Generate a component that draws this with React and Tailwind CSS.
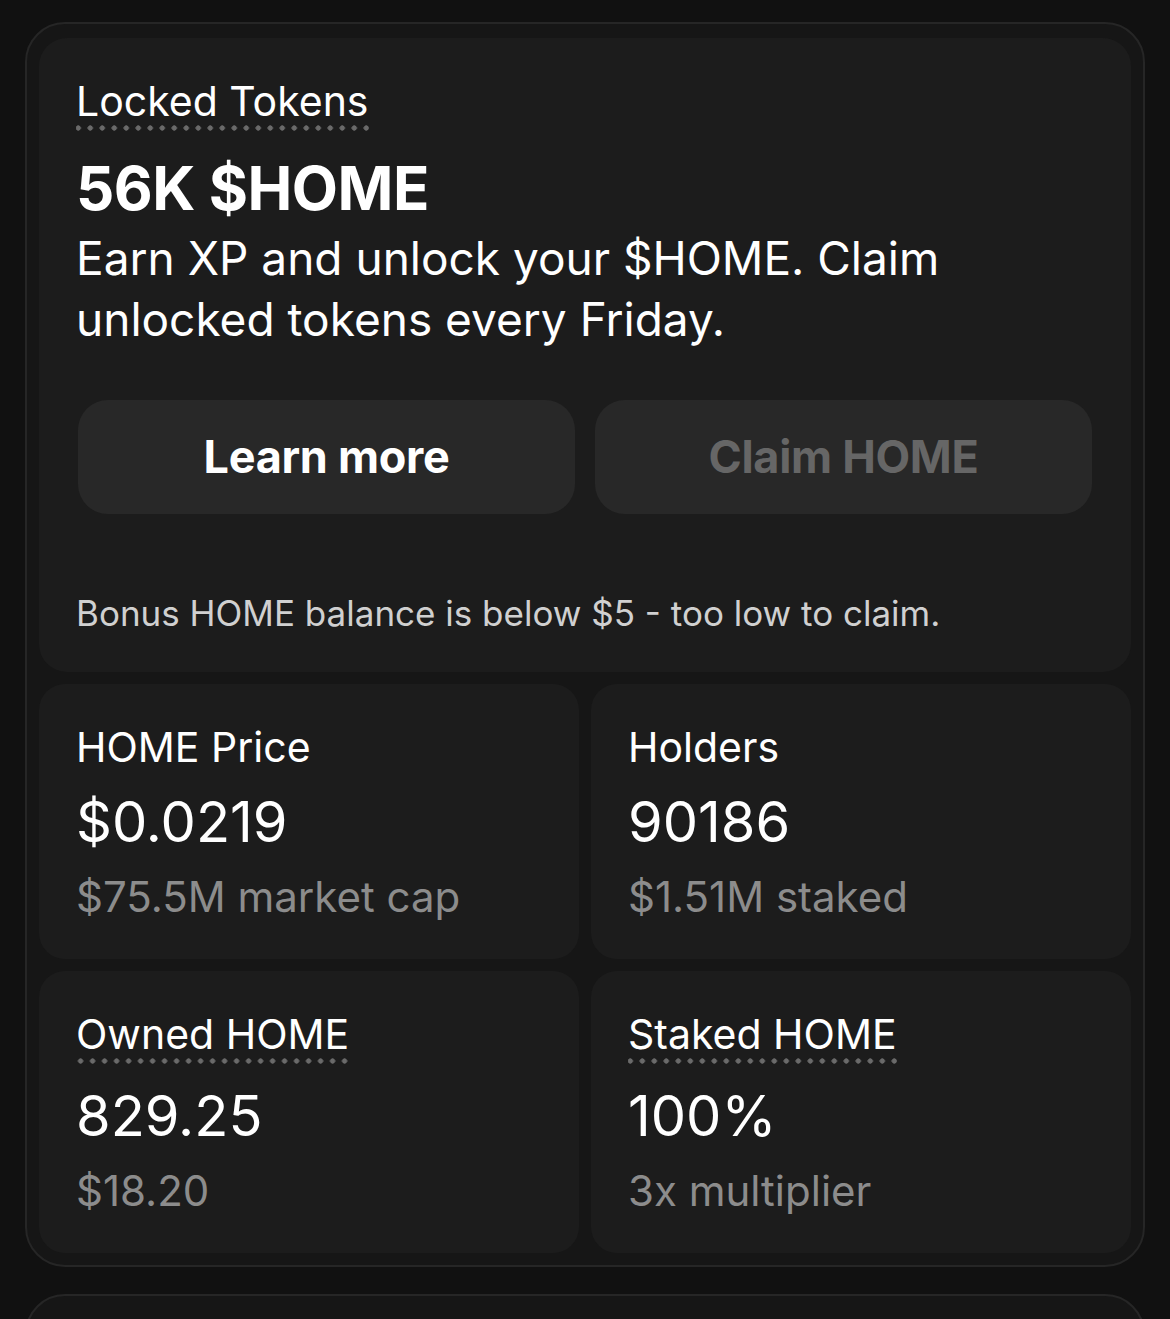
import React from 'react';

const font = { fontFamily: 'Inter, "Liberation Sans", sans-serif' };

const Dotted = ({ children }) => (
  <span className="inline-block pb-[5px] bg-[radial-gradient(circle,#6a6a6a_2.4px,transparent_2.9px)] bg-[length:12px_6px] bg-repeat-x bg-bottom">
    {children}
  </span>
);

const StatCard = ({ label, value, sub, dotted }) => (
  <div className="bg-[#1c1c1c] rounded-[26px] px-[37px] pt-[38px] pb-[34px]">
    <div className="text-[41px] leading-[50px] text-white">
      {dotted ? <Dotted>{label}</Dotted> : label}
    </div>
    <div className={`text-[56px] leading-[64px] text-white ${dotted ? 'mt-[20px]' : 'mt-[18px]'}`}>{value}</div>
    <div className="text-[42px] leading-[56px] text-[#8c8c8c] mt-[15px]">{sub}</div>
  </div>
);

export default function App() {
  return (
    <div className="min-h-[1319px] bg-[#111111] px-[25px] pt-[22px] overflow-hidden" style={font}>
      <div className="bg-[#161616] border-2 border-[#262626] rounded-[40px] px-[12px] pt-[14px] pb-[12px] flex flex-col gap-[12px]">
        {/* Locked tokens */}
        <div className="bg-[#1c1c1c] rounded-[28px] px-[37px] pt-[38px] pb-[37px]">
          <div className="text-[41px] leading-[50px] text-white">
            <Dotted>Locked Tokens</Dotted>
          </div>
          <div className="text-[60px] leading-[72px] font-bold text-white mt-[21px] tracking-[-0.5px]">56K $HOME</div>
          <p className="text-[46px] leading-[61px] text-white mt-[4px]">
            Earn XP and unlock your $HOME. Claim unlocked tokens every Friday.
          </p>
          <div className="grid grid-cols-2 gap-[20px] mt-[50px] px-[2px]">
            <button className="h-[114px] rounded-[30px] bg-[#282828] text-white text-[45px] font-bold tracking-[-0.3px]">
              Learn more
            </button>
            <button className="h-[114px] rounded-[30px] bg-[#282828] text-[#666666] text-[45px] font-bold tracking-[-0.3px]">
              Claim HOME
            </button>
          </div>
          <p className="text-[35px] leading-[44px] text-[#d0d0d0] mt-[77px]">
            Bonus HOME balance is below $5 - too low to claim.
          </p>
        </div>

        <div className="grid grid-cols-2 gap-[12px]">
          <StatCard label="HOME Price" value="$0.0219" sub="$75.5M market cap" />
          <StatCard label="Holders" value="90186" sub="$1.51M staked" />
          <StatCard label="Owned HOME" value="829.25" sub="$18.20" dotted />
          <StatCard label="Staked HOME" value="100%" sub="3x multiplier" dotted />
        </div>
      </div>
      <div className="mt-[27px] h-[80px] bg-[#161616] border-2 border-[#262626] rounded-[40px]" />
    </div>
  );
}
